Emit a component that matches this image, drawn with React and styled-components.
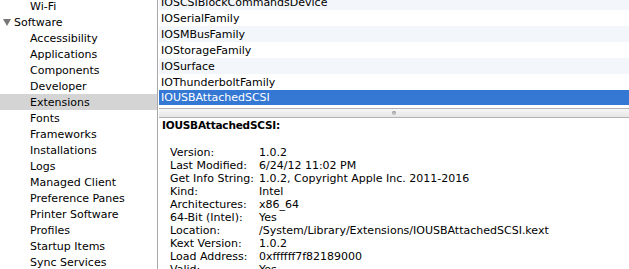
import React from 'react';
import styled, { createGlobalStyle } from 'styled-components';

const GlobalStyle = createGlobalStyle`
  html, body {
    margin: 0;
    padding: 0;
    overflow: hidden;
    background: #ffffff;
  }
  body {
    font-family: "DejaVu Sans", "Liberation Sans", sans-serif;
    color: #000;
    -webkit-font-smoothing: antialiased;
  }
`;

const sidebarItems = [
  { label: 'Wi-Fi', level: 1 },
  { label: 'Software', level: 0, open: true },
  { label: 'Accessibility', level: 1 },
  { label: 'Applications', level: 1 },
  { label: 'Components', level: 1 },
  { label: 'Developer', level: 1 },
  { label: 'Extensions', level: 1, selected: true },
  { label: 'Fonts', level: 1 },
  { label: 'Frameworks', level: 1 },
  { label: 'Installations', level: 1 },
  { label: 'Logs', level: 1 },
  { label: 'Managed Client', level: 1 },
  { label: 'Preference Panes', level: 1 },
  { label: 'Printer Software', level: 1 },
  { label: 'Profiles', level: 1 },
  { label: 'Startup Items', level: 1 },
  { label: 'Sync Services', level: 1 },
];

const listItems = [
  'IOSCSIBlockCommandsDevice',
  'IOSerialFamily',
  'IOSMBusFamily',
  'IOStorageFamily',
  'IOSurface',
  'IOThunderboltFamily',
  'IOUSBAttachedSCSI',
];

const details = [
  ['Version:', '1.0.2'],
  ['Last Modified:', '6/24/12 11:02 PM'],
  ['Get Info String:', '1.0.2, Copyright Apple Inc. 2011-2016'],
  ['Kind:', 'Intel'],
  ['Architectures:', 'x86_64'],
  ['64-Bit (Intel):', 'Yes'],
  ['Location:', '/System/Library/Extensions/IOUSBAttachedSCSI.kext'],
  ['Kext Version:', '1.0.2'],
  ['Load Address:', '0xffffff7f82189000'],
  ['Valid:', 'Yes'],
];

const Window = styled.div`
  display: flex;
  width: 629px;
  height: 269px;
  overflow: hidden;
`;

const Sidebar = styled.nav`
  width: 157px;
  flex-shrink: 0;
  border-right: 1px solid #a8a8a8;
  display: flex;
  flex-direction: column;
  overflow: hidden;
`;

const SidebarTrack = styled.div`
  margin-top: -2px;
`;

const SidebarRow = styled.div`
  height: 16px;
  display: flex;
  align-items: center;
  padding-left: ${(p) => (p.$level ? 30 : 3)}px;
  font-size: 11px;
  background: ${(p) => (p.$selected ? '#d4d4d4' : 'transparent')};
  white-space: nowrap;
`;

const Disclosure = styled.span`
  width: 0;
  height: 0;
  border-left: 4px solid transparent;
  border-right: 4px solid transparent;
  border-top: 7px solid #777777;
  margin-right: 3px;
  margin-top: 1px;
`;

const Main = styled.section`
  flex: 1;
  display: flex;
  flex-direction: column;
  margin-left: 1px;
  overflow: hidden;
`;

const List = styled.div`
  height: 108px;
  overflow: hidden;
  flex-shrink: 0;
`;

const ListTrack = styled.div`
  margin-top: -6px;
`;

const ListRow = styled.div`
  height: 16px;
  display: flex;
  align-items: center;
  padding-left: 2px;
  font-size: 11px;
  white-space: nowrap;
  background: ${(p) => (p.$selected ? '#3478d3' : p.$odd ? '#ffffff' : '#f3f6fa')};
  color: ${(p) => (p.$selected ? '#ffffff' : '#000')};
  ${(p) => p.$selected && 'height: 15px; margin-bottom: 1px;'}
`;

const Splitter = styled.div`
  height: 8px;
  flex-shrink: 0;
  border-top: 1px solid #b3b3b3;
  border-bottom: 1px solid #b3b3b3;
  background: linear-gradient(#f6f6f6, #e6e6e6);
  display: flex;
  align-items: center;
  justify-content: center;
`;

const Dimple = styled.span`
  width: 4px;
  height: 4px;
  border-radius: 50%;
  background: #bdbdbd;
  box-shadow: inset 0 1px 0 #9c9c9c;
`;

const Detail = styled.div`
  flex: 1;
  padding: 1px 0 0 3px;
  font-size: 11px;
  overflow: hidden;
`;

const Title = styled.div`
  font-weight: bold;
  font-size: 10.5px;
  letter-spacing: -0.2px;
  height: 13px;
  line-height: 13px;
  margin-bottom: 14px;
`;

const Table = styled.div`
  display: grid;
  grid-template-columns: 89px auto;
  grid-auto-rows: 13px;
  line-height: 13px;
  padding-left: 8px;
  white-space: nowrap;
`;

export default function App() {
  return (
    <>
      <GlobalStyle />
      <Window>
        <Sidebar>
          <SidebarTrack>
            {sidebarItems.map((item) => (
              <SidebarRow key={item.label} $level={item.level} $selected={item.selected}>
                {item.open && <Disclosure />}
                {item.label}
              </SidebarRow>
            ))}
          </SidebarTrack>
        </Sidebar>
        <Main>
          <List>
            <ListTrack>
              {listItems.map((name, i) => (
                <ListRow key={name} $odd={i % 2 === 1} $selected={name === 'IOUSBAttachedSCSI'}>
                  {name}
                </ListRow>
              ))}
            </ListTrack>
          </List>
          <Splitter>
            <Dimple />
          </Splitter>
          <Detail>
            <Title>IOUSBAttachedSCSI:</Title>
            <Table>
              {details.map(([k, v]) => (
                <React.Fragment key={k}>
                  <span>{k}</span>
                  <span>{v}</span>
                </React.Fragment>
              ))}
            </Table>
          </Detail>
        </Main>
      </Window>
    </>
  );
}
